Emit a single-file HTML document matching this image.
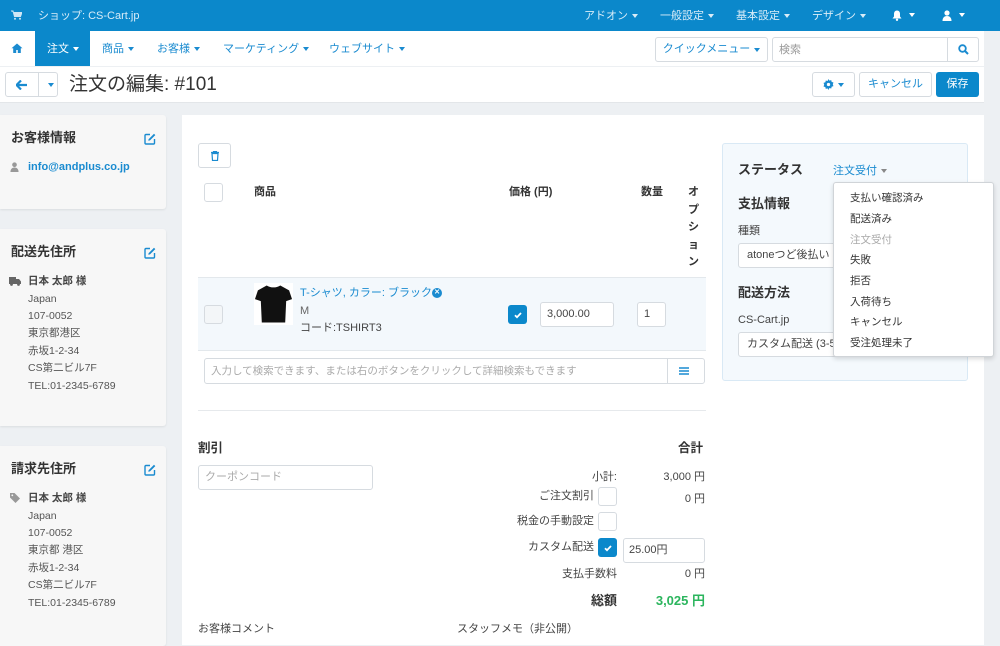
<!DOCTYPE html>
<html><head><meta charset="utf-8"><style>
*{box-sizing:border-box;margin:0;padding:0}
body{width:1000px;height:633px;overflow:hidden;background:#edf0f3;font-family:"Liberation Sans","Noto Sans CJK JP",sans-serif;font-size:11px;color:#333;position:relative;line-height:1.15}
.a{position:absolute}
.top{left:0;top:0;width:1000px;height:31px;background:#0b88cb;color:#d8ecf8;font-size:11px}
.caret{display:inline-block;width:0;height:0;border-left:3.5px solid transparent;border-right:3.5px solid transparent;border-top:4px solid currentColor;vertical-align:middle;margin-left:4px}
.nav{left:0;top:31px;width:984px;height:35px;background:#fff;color:#1a8bd0}
.tb{left:0;top:67px;width:984px;height:36px;background:#fff;border-bottom:1px solid #e3e6e9}
.btn{border:1px solid #d6dbe0;border-radius:3px;background:#fff}
.card{left:0;width:166px;background:#f7f7f7;border-radius:0 3px 3px 0;box-shadow:0 1px 2px rgba(0,0,0,.08)}
.card h3{position:absolute;left:11px;top:16px;font-size:13px;font-weight:bold;color:#333}
.edit{position:absolute;right:10px;top:18px}
.card .l{position:absolute;left:28px;font-size:10.5px;color:#555}
.main{left:182px;top:115px;width:802px;height:530px;background:#fff}
.inp{border:1px solid #d6dbe0;border-radius:3px;background:#fff;display:flex;align-items:center}
.chk{width:19px;height:19px;border:1px solid #d6dbe0;border-radius:3px;background:#fff}
.chkon{width:19px;height:19px;border-radius:3px;background:#0b88cb;display:flex;align-items:center;justify-content:center}
.r{text-align:right}
.ctr{display:flex;align-items:center;justify-content:center}
</style></head><body>
<svg width="0" height="0" style="position:absolute"><defs>
<symbol id="ed" viewBox="0 0 12 12"><path d="M6 1.5H2a1 1 0 0 0-1 1V10a1 1 0 0 0 1 1h7.5a1 1 0 0 0 1-1V6" fill="none" stroke="#1a8bd0" stroke-width="1.4"/><path d="M10 0.8l1.3 1.3L6 7.4 4.3 7.8 4.7 6.1z" fill="#1a8bd0"/></symbol>
<symbol id="ck" viewBox="0 0 10 10"><path d="M2 5.2l2 2 4-4.2" fill="none" stroke="#fff" stroke-width="1.8"/></symbol>
</defs></svg>
<div class="a top">
 <svg class="a" style="left:11px;top:10px" width="11" height="10" viewBox="0 0 11 10"><path d="M0 1h2l1.5 5.5h6L11 2.5H3" fill="#cfe6f5" stroke="#cfe6f5" stroke-width="1"/><circle cx="4" cy="8.7" r="1" fill="#cfe6f5"/><circle cx="9" cy="8.7" r="1" fill="#cfe6f5"/></svg>
 <span class="a" style="left:38px;top:10px">ショップ: CS-Cart.jp</span>
 <span class="a" style="left:584px;top:10px">アドオン<i class="caret"></i></span>
 <span class="a" style="left:660px;top:10px">一般設定<i class="caret"></i></span>
 <span class="a" style="left:736px;top:10px">基本設定<i class="caret"></i></span>
 <span class="a" style="left:812px;top:10px">デザイン<i class="caret"></i></span>
 <svg class="a" style="left:892px;top:10px" width="10" height="11" viewBox="0 0 10 11"><path d="M5 0.5c-2 0-3 1.5-3 3.5v2.5L0.5 8.5h9L8 6.5V4c0-2-1-3.5-3-3.5z" fill="#fff"/><circle cx="5" cy="9.8" r="1.2" fill="#fff"/></svg><i class="caret a" style="left:905px;top:13px;color:#fff"></i>
 <svg class="a" style="left:942px;top:10px" width="10" height="11" viewBox="0 0 10 11"><circle cx="5" cy="3" r="2.6" fill="#fff"/><path d="M0.5 11c0-3.5 2-5 4.5-5s4.5 1.5 4.5 5z" fill="#fff"/></svg><i class="caret a" style="left:955px;top:13px;color:#fff"></i>
</div>
<div class="a nav">
 <svg class="a" style="left:11px;top:12px" width="12" height="10" viewBox="0 0 12 10"><path d="M6 0.5L0.5 5.2h1.7V10h3V7h1.6v3h3V5.2h1.7z" fill="#1a8bd0"/></svg>
 <div class="a" style="left:35px;top:0;width:55px;height:35px;background:#0b88cb;color:#fff;padding:12px 0 0 12px">注文<i class="caret"></i></div>
 <span class="a" style="left:102px;top:12px">商品<i class="caret"></i></span>
 <span class="a" style="left:157px;top:12px">お客様<i class="caret"></i></span>
 <span class="a" style="left:223px;top:12px">マーケティング<i class="caret"></i></span>
 <span class="a" style="left:329px;top:12px">ウェブサイト<i class="caret"></i></span>
 <div class="a btn ctr" style="left:655px;top:6px;width:113px;height:25px">クイックメニュー<i class="caret"></i></div>
 <div class="a btn" style="left:772px;top:6px;width:207px;height:25px;color:#999;padding:6px 0 0 6px">検索<div class="a" style="left:174px;top:0;width:1px;height:23px;background:#d6dbe0"></div>
 <svg class="a" style="left:185px;top:6px" width="11" height="11" viewBox="0 0 11 11"><circle cx="4.5" cy="4.5" r="3.3" fill="none" stroke="#1a8bd0" stroke-width="1.8"/><path d="M7 7l3 3" stroke="#1a8bd0" stroke-width="2"/></svg></div>
</div>
<div class="a tb">
 <div class="a btn" style="left:5px;top:5px;width:53px;height:25px">
  <svg class="a" style="left:10px;top:7px" width="11" height="10" viewBox="0 0 11 10"><path d="M5 0.5L0.5 5 5 9.5M1 5h10" fill="none" stroke="#1a8bd0" stroke-width="2.2"/></svg>
  <div class="a" style="left:32px;top:0;width:1px;height:23px;background:#d6dbe0"></div><i class="caret a" style="left:38px;top:10px;color:#1a8bd0"></i></div>
 <span class="a" style="left:69px;top:7px;font-size:19px;color:#333">注文の編集: #101</span>
 <div class="a btn ctr" style="left:812px;top:5px;width:43px;height:25px;color:#1a8bd0">
  <svg width="11" height="11" viewBox="0 0 12 12"><path d="M6 0l1 1.8 2-.6.4 2 2 .6-.7 2 .7 2-2 .6-.4 2-2-.6L6 12l-1-1.8-2 .6-.4-2-2-.6.7-2-.7-2 2-.6.4-2 2 .6z" fill="#1a8bd0"/><circle cx="6" cy="6" r="1.8" fill="#fff"/></svg><i class="caret"></i></div>
 <div class="a btn ctr" style="left:859px;top:5px;width:73px;height:25px;color:#1a8bd0">キャンセル</div>
 <div class="a ctr" style="left:936px;top:5px;width:43px;height:25px;background:#0b88cb;border-radius:3px;color:#fff">保存</div>
</div>

<div class="a card" style="top:115px;height:94px"><h3>お客様情報</h3><svg class="edit" width="12" height="12"><use href="#ed"/></svg>
 <svg class="a" style="left:10px;top:47px" width="9" height="10" viewBox="0 0 10 11"><circle cx="5" cy="3" r="2.6" fill="#999"/><path d="M0.5 11c0-3.5 2-5 4.5-5s4.5 1.5 4.5 5z" fill="#999"/></svg>
 <span class="a" style="left:28px;top:46px;color:#1a8bd0;font-weight:bold;font-size:11px">info@andplus.co.jp</span></div>
<div class="a card" style="top:229px;height:197px"><h3>配送先住所</h3><svg class="edit" width="12" height="12"><use href="#ed"/></svg>
 <svg class="a" style="left:9px;top:48px" width="12" height="9" viewBox="0 0 12 9"><path d="M0 0h7v7H0zM7 2h3l2 2.5V7H7z" fill="#666"/><circle cx="2.5" cy="7.5" r="1.4" fill="#666"/><circle cx="9.5" cy="7.5" r="1.4" fill="#666"/></svg>
 <span class="l" style="top:46px;font-weight:bold;color:#444">日本 太郎 様</span>
 <span class="l" style="top:64px">Japan</span><span class="l" style="top:81px">107-0052</span><span class="l" style="top:98px">東京都港区</span><span class="l" style="top:116px">赤坂1-2-34</span><span class="l" style="top:133px">CS第二ビル7F</span><span class="l" style="top:151px">TEL:01-2345-6789</span></div>
<div class="a card" style="top:446px;height:200px"><h3>請求先住所</h3><svg class="edit" width="12" height="12"><use href="#ed"/></svg>
 <svg class="a" style="left:10px;top:47px" width="10" height="10" viewBox="0 0 10 10"><path d="M0 0h4.5L10 5.5 5.5 10 0 4.5z" fill="#999"/><circle cx="2.3" cy="2.3" r="0.9" fill="#f7f7f7"/></svg>
 <span class="l" style="top:46px;font-weight:bold;color:#444">日本 太郎 様</span>
 <span class="l" style="top:64px">Japan</span><span class="l" style="top:81px">107-0052</span><span class="l" style="top:98px">東京都 港区</span><span class="l" style="top:116px">赤坂1-2-34</span><span class="l" style="top:133px">CS第二ビル7F</span><span class="l" style="top:151px">TEL:01-2345-6789</span></div>

<div class="a main">
 <div class="a btn ctr" style="left:16px;top:28px;width:33px;height:25px">
  <svg width="8" height="10" viewBox="0 0 8 10"><path d="M0 1.5h8M2.5 1.5V0.3h3v1.2M1 2.5h6l-.5 7h-5z" fill="none" stroke="#1a8bd0" stroke-width="1.2"/></svg></div>
 <div class="a chk" style="left:22px;top:68px"></div>
 <span class="a" style="left:72px;top:71px;font-weight:bold">商品</span>
 <span class="a" style="left:327px;top:71px;font-weight:bold">価格 (円)</span>
 <span class="a" style="left:459px;top:71px;font-weight:bold">数量</span>
 <div class="a" style="left:506px;top:69px;width:12px;font-weight:bold;line-height:17.5px">オ プ シ ョ ン</div>
 <div class="a" style="left:16px;top:162px;width:508px;height:74px;background:#f3f8fc;border-top:1px solid #e3e8ec;border-bottom:1px solid #e3e8ec"></div>
 <div class="a chk" style="left:22px;top:190px;background:#f3f6f8"></div>
 <div class="a" style="left:72px;top:168px;width:39px;height:42px;background:#fff"></div>
 <svg class="a" style="left:72px;top:168px" width="39" height="42" viewBox="0 0 40 42"><path d="M13 2 L4 7 L1 16 L7 18 L8 40 L32 40 L33 18 L39 16 L36 7 L27 2 Q20 6 13 2Z" fill="#111"/></svg>
 <span class="a" style="left:118px;top:172px;color:#1a8bd0">T-シャツ, カラー: ブラック</span>
 <span class="a ctr" style="left:250px;top:173px;width:10px;height:10px;border-radius:50%;background:#1a8bd0;color:#fff;font-size:7px;font-weight:bold">✕</span>
 <span class="a" style="left:118px;top:190px;color:#666">M</span>
 <span class="a" style="left:118px;top:207px;color:#444">コード:TSHIRT3</span>
 <div class="a chkon" style="left:326px;top:190px"><svg width="10" height="10"><use href="#ck"/></svg></div>
 <div class="a inp" style="left:358px;top:187px;width:74px;height:25px;padding:0 6px;color:#444">3,000.00</div>
 <div class="a inp" style="left:455px;top:187px;width:29px;height:25px;padding:0 6px;color:#444">1</div>
 <div class="a inp" style="left:22px;top:243px;width:501px;height:26px;color:#aaa;font-size:10.5px;padding:0 6px">入力して検索できます、または右のボタンをクリックして詳細検索もできます
  <div class="a" style="left:462px;top:0;width:1px;height:24px;background:#d6dbe0"></div>
  <svg class="a" style="left:474px;top:8px" width="10" height="8"><path d="M0 1h10M0 4h10M0 7h10" stroke="#1a8bd0" stroke-width="1.6"/></svg></div>
 <div class="a" style="left:16px;top:295px;width:508px;height:1px;background:#e6e9ec"></div>
 <span class="a" style="left:16px;top:326px;font-size:12.5px;font-weight:bold">割引</span>
 <span class="a" style="left:496px;top:326px;font-size:12.5px;font-weight:bold">合計</span>
 <div class="a inp" style="left:16px;top:350px;width:175px;height:25px;color:#aaa;padding:0 6px">クーポンコード</div>
 <span class="a r" style="left:340px;top:356px;width:95px;color:#444">小計:</span><span class="a r" style="left:440px;top:356px;width:83px;color:#444">3,000 円</span>
 <span class="a r" style="left:300px;top:375px;width:112px;color:#444">ご注文割引</span><div class="a chk" style="left:416px;top:372px"></div><span class="a r" style="left:440px;top:378px;width:83px;color:#444">0 円</span>
 <span class="a r" style="left:300px;top:400px;width:112px;color:#444">税金の手動設定</span><div class="a chk" style="left:416px;top:397px"></div>
 <span class="a r" style="left:300px;top:426px;width:112px;color:#444">カスタム配送</span><div class="a chkon" style="left:416px;top:423px"><svg width="10" height="10"><use href="#ck"/></svg></div>
 <div class="a inp" style="left:441px;top:423px;width:82px;height:25px;padding:0 5px;color:#444">25.00円</div>
 <span class="a r" style="left:300px;top:453px;width:135px;color:#444">支払手数料</span><span class="a r" style="left:440px;top:453px;width:83px;color:#444">0 円</span>
 <span class="a r" style="left:340px;top:479px;width:95px;font-size:13px;font-weight:bold">総額</span><span class="a r" style="left:430px;top:479px;width:93px;font-size:13px;font-weight:bold;color:#2bb55d">3,025 円</span>
 <span class="a" style="left:16px;top:508px;color:#444">お客様コメント</span>
 <span class="a" style="left:275px;top:508px;color:#444">スタッフメモ（非公開）</span>

 <div class="a" style="left:540px;top:28px;width:246px;height:238px;background:#f4f9fd;border:1px solid #d9e9f5;border-radius:3px">
  <span class="a" style="left:15px;top:19px;font-size:13px;font-weight:bold">ステータス</span>
  <span class="a" style="left:110px;top:21px;color:#1a8bd0">注文受付<i class="caret" style="color:#888"></i></span>
  <span class="a" style="left:15px;top:53px;font-size:13px;font-weight:bold">支払情報</span>
  <span class="a" style="left:15px;top:81px;color:#444">種類</span>
  <div class="a inp" style="left:15px;top:99px;width:200px;height:25px;padding:0 8px;color:#444">atoneつど後払い</div>
  <span class="a" style="left:15px;top:142px;font-size:13px;font-weight:bold">配送方法</span>
  <span class="a" style="left:15px;top:170px;color:#444">CS-Cart.jp</span>
  <div class="a inp" style="left:15px;top:188px;width:200px;height:25px;padding:0 8px;color:#444">カスタム配送 (3-5</div>
 </div>
 <div class="a" style="left:651px;top:67px;width:161px;height:175px;background:#fff;border:1px solid #d0d4d8;border-radius:3px;box-shadow:0 2px 5px rgba(0,0,0,.15);color:#333;font-size:10.5px">
  <span class="a" style="left:16px;top:9px">支払い確認済み</span>
  <span class="a" style="left:16px;top:30px">配送済み</span>
  <span class="a" style="left:16px;top:51px;color:#aaa">注文受付</span>
  <span class="a" style="left:16px;top:71px">失敗</span>
  <span class="a" style="left:16px;top:92px">拒否</span>
  <span class="a" style="left:16px;top:113px">入荷待ち</span>
  <span class="a" style="left:16px;top:133px">キャンセル</span>
  <span class="a" style="left:16px;top:154px">受注処理未了</span>
 </div>
</div>
</body></html>
